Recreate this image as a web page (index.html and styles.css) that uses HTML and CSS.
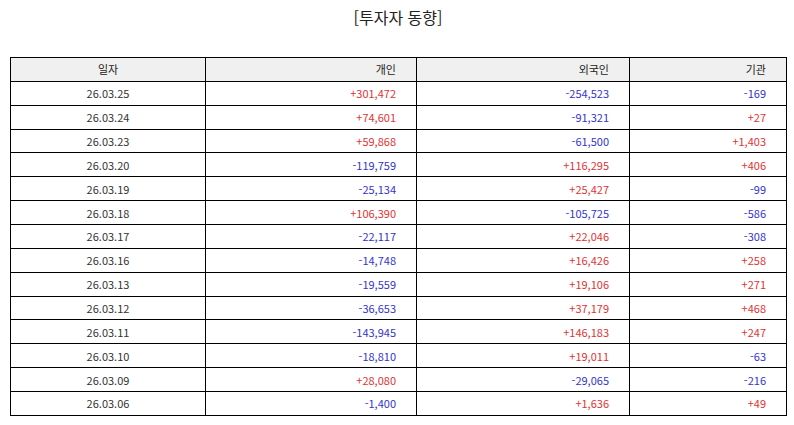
FILE: index.html
```html
<!DOCTYPE html>
<html lang="ko">
<head>
<meta charset="utf-8">
<link rel="stylesheet" href="styles.css">
</head>
<body>
<div class="page">
  <h1 class="title">[투자자 동향]</h1>
  <table class="flow">
    <colgroup>
      <col class="c-date"><col class="c-ind"><col class="c-for"><col class="c-inst">
    </colgroup>
    <thead>
      <tr><th class="center">일자</th><th>개인</th><th>외국인</th><th>기관</th></tr>
    </thead>
    <tbody>
      <tr><td class="center">26.03.25</td><td class="up">+301,472</td><td class="down">-254,523</td><td class="down">-169</td></tr>
      <tr><td class="center">26.03.24</td><td class="up">+74,601</td><td class="down">-91,321</td><td class="up">+27</td></tr>
      <tr><td class="center">26.03.23</td><td class="up">+59,868</td><td class="down">-61,500</td><td class="up">+1,403</td></tr>
      <tr><td class="center">26.03.20</td><td class="down">-119,759</td><td class="up">+116,295</td><td class="up">+406</td></tr>
      <tr><td class="center">26.03.19</td><td class="down">-25,134</td><td class="up">+25,427</td><td class="down">-99</td></tr>
      <tr><td class="center">26.03.18</td><td class="up">+106,390</td><td class="down">-105,725</td><td class="down">-586</td></tr>
      <tr><td class="center">26.03.17</td><td class="down">-22,117</td><td class="up">+22,046</td><td class="down">-308</td></tr>
      <tr><td class="center">26.03.16</td><td class="down">-14,748</td><td class="up">+16,426</td><td class="up">+258</td></tr>
      <tr><td class="center">26.03.13</td><td class="down">-19,559</td><td class="up">+19,106</td><td class="up">+271</td></tr>
      <tr><td class="center">26.03.12</td><td class="down">-36,653</td><td class="up">+37,179</td><td class="up">+468</td></tr>
      <tr><td class="center">26.03.11</td><td class="down">-143,945</td><td class="up">+146,183</td><td class="up">+247</td></tr>
      <tr><td class="center">26.03.10</td><td class="down">-18,810</td><td class="up">+19,011</td><td class="down">-63</td></tr>
      <tr><td class="center">26.03.09</td><td class="up">+28,080</td><td class="down">-29,065</td><td class="down">-216</td></tr>
      <tr><td class="center">26.03.06</td><td class="down">-1,400</td><td class="up">+1,636</td><td class="up">+49</td></tr>
    </tbody>
  </table>
</div>
</body>
</html>
```

FILE: styles.css
```css
html, body {
  margin: 0;
  padding: 0;
  background: #ffffff;
}
.page {
  padding: 0 8px 0 10px;
  font-family: "Noto Sans CJK KR", "Noto Sans", sans-serif;
  color: #333333;
}
.title {
  margin: 0;
  height: 57px;
  padding-top: 6px;
  box-sizing: border-box;
  font-size: 16px;
  font-weight: normal;
  line-height: 22px;
  text-align: center;
  color: #222222;
}
.flow {
  width: 776px;
  border-collapse: collapse;
  table-layout: fixed;
  font-size: 11px;
}
.c-date { width: 195px; }
.c-ind { width: 211px; }
.c-for { width: 213px; }
.c-inst { width: 157px; }
.flow th, .flow td {
  border: 1px solid #000000;
  height: 22.87px;
  padding: 0 20px 0 0;
  text-align: right;
  line-height: 14px;
  font-weight: normal;
  white-space: nowrap;
}
.flow th {
  background: #f0f0f0;
  color: #222222;
}
.flow .center {
  text-align: center;
  padding: 0;
}
.flow td.center { color: #333333; }
.up { color: #e03333; }
.down { color: #3333cc; }
```
